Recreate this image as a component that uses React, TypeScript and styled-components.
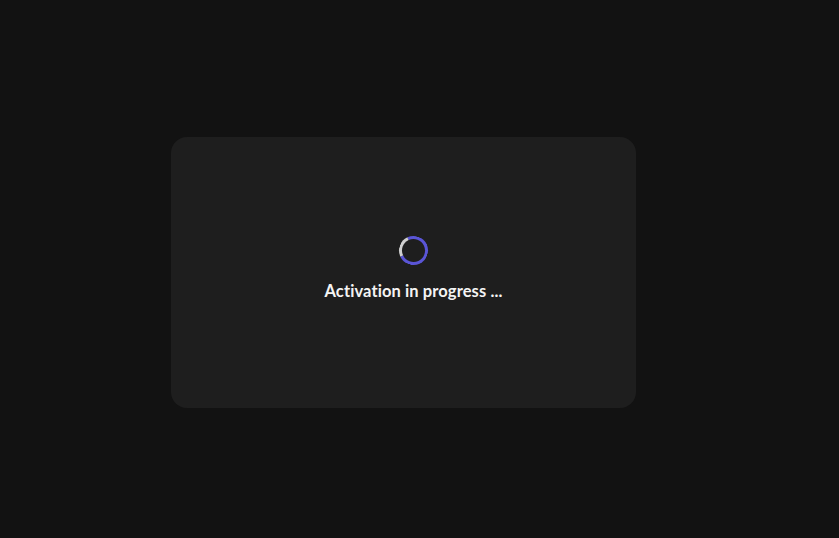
import styled, { createGlobalStyle } from "styled-components";

const GlobalStyle = createGlobalStyle`
  html, body {
    margin: 0;
    padding: 0;
    background: #121212;
  }
  body {
    font-family: "Lato", "Noto Sans", sans-serif;
  }
`;

const Page = styled.div`
  width: 839px;
  height: 538px;
  box-sizing: border-box;
  padding: 137px 0 0 171px;
  background: #121212;
`;

const Card = styled.div`
  width: 465px;
  height: 271px;
  box-sizing: border-box;
  padding: 0 0 9px 20px;
  border-radius: 16px;
  background: #1e1e1e;
  display: flex;
  flex-direction: column;
  align-items: center;
  justify-content: center;
  gap: 16px;
`;

const Spinner = styled.div`
  width: 23px;
  height: 23px;
  border-radius: 50%;
  border: 3px solid #5a55d6;
  border-left-color: #cfcfcf;
  transform: rotate(20deg);
`;

const Message = styled.div`
  color: #f4f4f4;
  font-size: 16.5px;
  font-weight: 700;
  letter-spacing: 0.1px;
`;

export default function App() {
  return (
    <>
      <GlobalStyle />
      <Page>
        <Card>
          <Spinner />
          <Message>Activation in progress ...</Message>
        </Card>
      </Page>
    </>
  );
}
